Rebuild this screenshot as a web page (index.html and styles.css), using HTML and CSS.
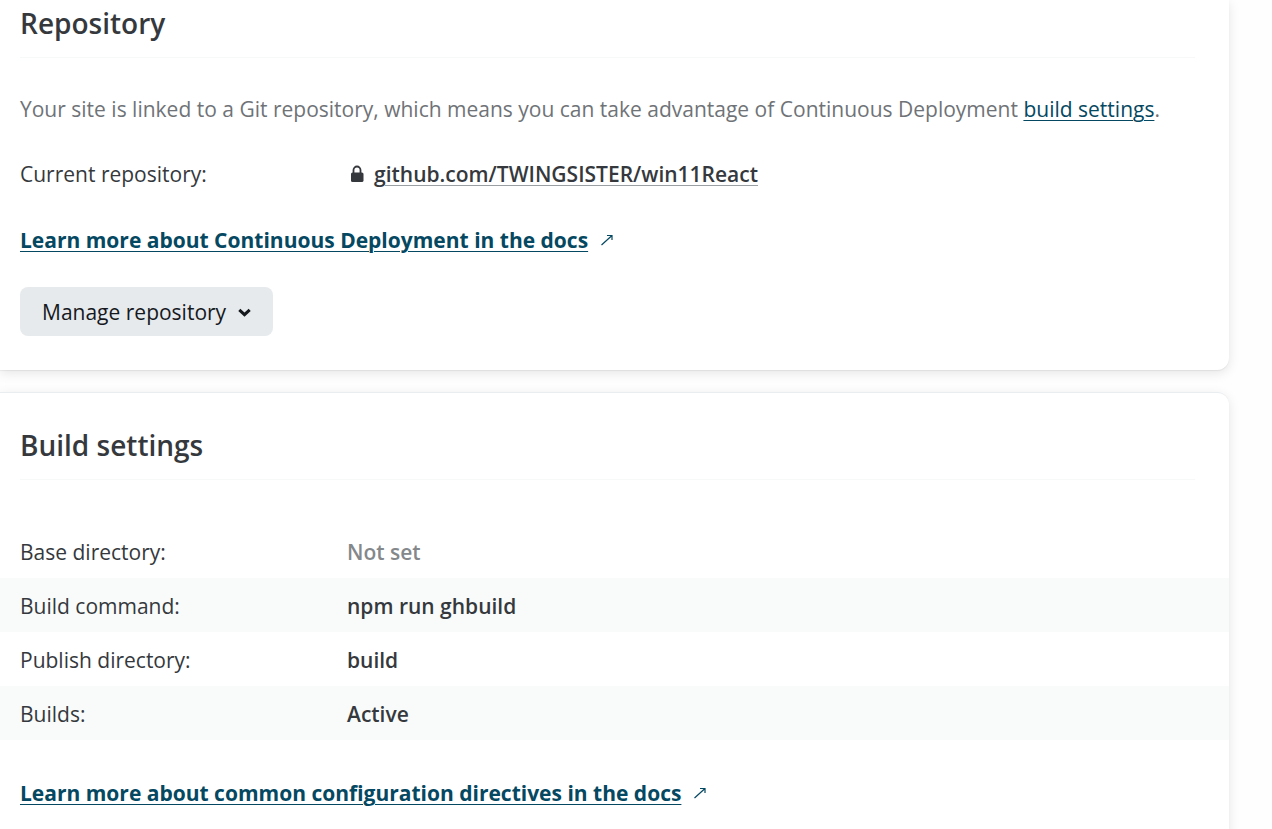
FILE: index.html
```html
<!DOCTYPE html>
<html lang="en">
<head>
<meta charset="utf-8">
<title>Build settings</title>
<link rel="stylesheet" href="styles.css">
</head>
<body>
<main class="page">
  <section class="card card-first">
    <h2 class="card-title">Repository</h2>
    <p class="intro">Your site is linked to a Git repository, which means you can take advantage of Continuous Deployment <a class="link" href="#build-settings">build settings</a>.</p>
    <dl class="repo">
      <dt>Current repository:</dt>
      <dd>
        <svg class="lock" viewBox="0 0 14 18" aria-hidden="true"><path d="M3.500 9V5a3.500 3.500 0 0 1 7 0v4" fill="none" stroke="currentColor" stroke-width="1.800"/><rect x="1" y="7.500" width="12.500" height="9.500" rx="1.600" fill="currentColor"/></svg>
        <a class="repo-link" href="#repository">github.com/TWINGSISTER/win11React</a>
      </dd>
    </dl>
    <p class="docs">
      <a class="docs-link" href="#deployment">Learn more about Continuous Deployment in the docs</a>
      <svg class="arrow" viewBox="0 0 12 12" aria-hidden="true"><path d="M.5 11 11 1.500M6 1.500h5v4.500" fill="none" stroke="currentColor" stroke-width="1.200"/></svg>
    </p>
    <button class="button" type="button">Manage repository
      <svg class="chevron" viewBox="0 0 12 8" aria-hidden="true"><path d="M1.200 1.500 6 6l4.800-4.500" fill="none" stroke="currentColor" stroke-width="2.800"/></svg>
    </button>
  </section>
  <section class="card card-build" id="build-settings">
    <h2 class="card-title">Build settings</h2>
    <dl class="settings">
      <div class="setting"><dt>Base directory:</dt><dd class="unset">Not set</dd></div>
      <div class="setting"><dt>Build command:</dt><dd>npm run ghbuild</dd></div>
      <div class="setting"><dt>Publish directory:</dt><dd>build</dd></div>
      <div class="setting"><dt>Builds:</dt><dd>Active</dd></div>
    </dl>
    <p class="docs">
      <a class="docs-link" href="#configuration">Learn more about common configuration directives in the docs</a>
      <svg class="arrow" viewBox="0 0 12 12" aria-hidden="true"><path d="M.5 11 11 1.500M6 1.500h5v4.500" fill="none" stroke="currentColor" stroke-width="1.200"/></svg>
    </p>
  </section>
</main>
</body>
</html>
```
FILE: styles.css
```css
* { box-sizing: border-box; }
body {
  margin: 0;
  background: #fefefe;
  color: #35393d;
  font-family: "Segoe UI", "Open Sans", "Noto Sans", sans-serif;
  font-size: 21px;
  line-height: 32px;
}
h2, p, dl, dd { margin: 0; }
.page {
  display: flex;
  flex-direction: column;
  gap: 22px;
  padding-right: 43px;
}
.card {
  padding: 0 34px 34px 20px;
  background: #fff;
  border-top: 1px solid #e9edef;
  border-radius: 0 12px 12px 0;
  box-shadow: 0 3px 12px rgba(0, 0, 0, .1), 0 1px 1px rgba(0, 0, 0, .06);
}
.card-first {
  border-top: 0;
  border-top-right-radius: 0;
}
.card-build { padding-top: 29px; }
.card-title {
  padding: 3px 0 14px;
  border-bottom: 1px solid #f7f8f8;
  font-size: 28px;
  font-weight: 600;
  line-height: 40px;
}
.intro {
  margin-top: 35px;
  color: #6f7377;
}
.link, .docs-link {
  color: #054861;
  text-decoration-thickness: 1px;
  text-underline-offset: 3px;
}
.repo {
  display: grid;
  grid-template-columns: 330px 1fr;
  margin-top: 33px;
}
.repo dd {
  display: flex;
  align-items: center;
  gap: 10px;
}
.lock {
  width: 14px;
  height: 18px;
}
.repo-link {
  color: inherit;
  font-weight: 600;
  text-decoration-color: #9a9fa4;
  text-decoration-thickness: 1px;
  text-underline-offset: 3px;
}
.docs {
  display: flex;
  align-items: center;
  gap: 13px;
  margin-top: 34px;
  color: #054861;
}
.docs-link { font-weight: 700; }
.arrow {
  width: 12px;
  height: 12px;
}
.button {
  display: flex;
  align-items: center;
  gap: 12px;
  margin-top: 31px;
  padding: 9px 22px 8px;
  border: 0;
  border-radius: 8px;
  background: #e7eaed;
  color: #15191d;
  font: inherit;
}
.chevron {
  width: 13px;
  height: 9px;
}
.settings { margin: 44px -34px 0 -20px; }
.settings + .docs { margin-top: 37px; }
.setting {
  display: grid;
  grid-template-columns: 327px 1fr;
  padding: 12px 34px 10px 20px;
}
.setting:nth-child(even) { background: #f9fbfb; }
.setting dd { font-weight: 600; }
.setting .unset { color: #84888b; }
```
